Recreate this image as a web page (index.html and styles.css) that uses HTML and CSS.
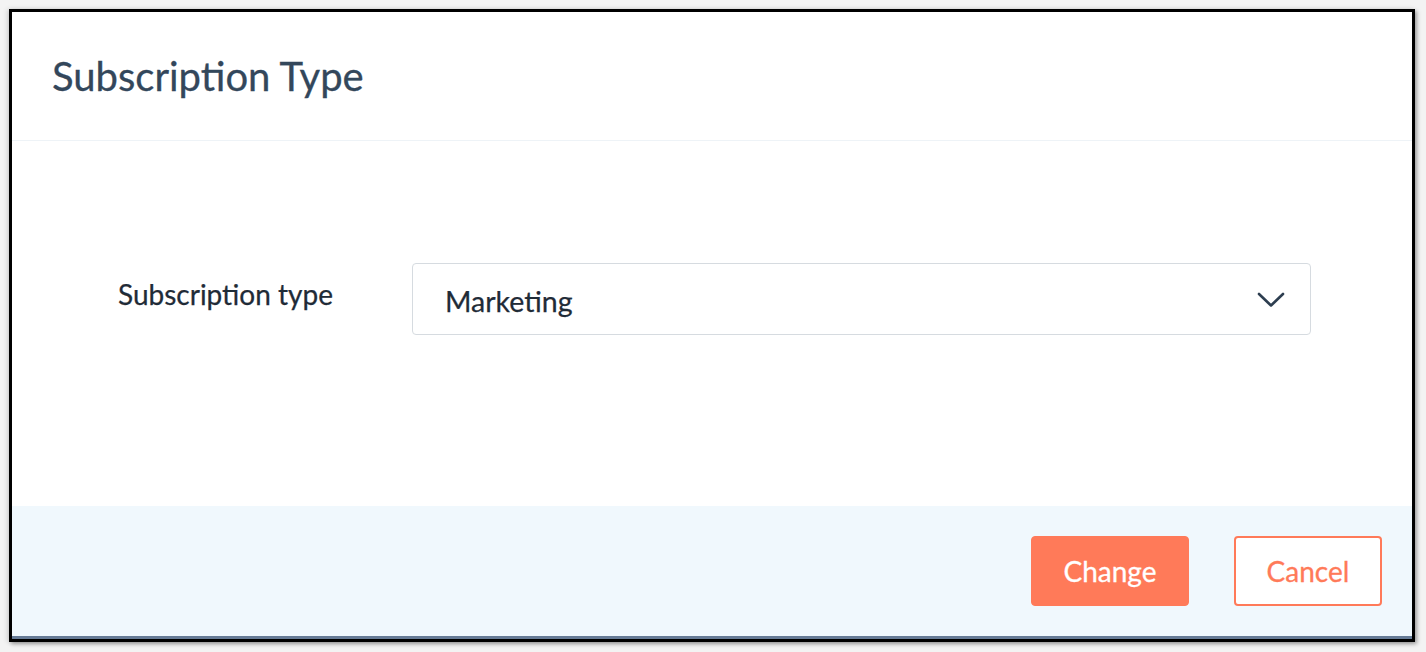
FILE: index.html
```html
<!DOCTYPE html>
<html>
<head>
<meta charset="utf-8">
<link rel="stylesheet" href="styles.css">
</head>
<body>
<div class="dialog">
  <div class="dialog-header">
    <h1 class="dialog-title">Subscription Type</h1>
  </div>
  <div class="dialog-body">
    <div class="field-row">
      <label class="field-label">Subscription type</label>
      <div class="select">
        <span class="select-value">Marketing</span>
        <svg class="select-caret" width="28" height="16" viewBox="0 0 28 16"><path d="M2 2 L14 13.5 L26 2" fill="none" stroke="#2d3e50" stroke-width="2.6" stroke-linecap="round" stroke-linejoin="round"/></svg>
      </div>
    </div>
  </div>
  <div class="dialog-footer">
    <button class="btn btn-primary">Change</button>
    <button class="btn btn-secondary">Cancel</button>
  </div>
</div>
</body>
</html>
```
FILE: styles.css
```css
* { box-sizing: border-box; }
html, body { margin: 0; padding: 0; }
body {
  background: #f3f3f3;
  font-family: Lato, "Noto Sans", sans-serif;
  padding: 9px 0 0 9px;
  height: 652px;
  overflow: hidden;
}
.dialog {
  width: 1406px;
  height: 633px;
  border: 3px solid #000;
  background: #fff;
  display: flex;
  flex-direction: column;
  box-shadow: 2px 2px 4px rgba(0,0,0,0.35), -2px 0 5px rgba(0,0,0,0.12);
}
.dialog-header {
  height: 129px;
  flex: none;
  border-bottom: 1px solid #eef3f7;
  display: flex;
  align-items: center;
  padding-left: 40px;
}
.dialog-title {
  margin: 0;
  font-size: 40px;
  font-weight: 400;
  color: #33475b;
  -webkit-text-stroke: 0.3px #33475b;
}
.dialog-body {
  flex: 1;
  padding: 122px 101px 0 106px;
}
.field-row {
  display: flex;
  align-items: center;
}
.field-label {
  width: 294px;
  font-size: 28px;
  color: #1f2b37;
  margin-top: -10px;
  -webkit-text-stroke: 0.25px #1f2b37;
}
.select {
  flex: 1;
  height: 72px;
  border: 1px solid #d6dbe0;
  border-radius: 4px;
  display: flex;
  align-items: center;
  justify-content: space-between;
  padding: 0 25px 0 32px;
}
.select-value {
  font-size: 28.5px;
  color: #1f2b37;
  margin-top: 4px;
  -webkit-text-stroke: 0.25px #1f2b37;
}
.select-caret {
  margin-top: 1px;
}
.dialog-footer {
  height: 133px;
  flex: none;
  background: #f0f8fd;
  border-bottom: 3px solid #667b96;
  display: flex;
  justify-content: flex-end;
  align-items: center;
  gap: 45px;
  padding-right: 30px;
}
.btn {
  font-family: Lato, "Noto Sans", sans-serif;
  font-size: 28px;
  height: 70px;
  border-radius: 4px;
  cursor: pointer;
}
.btn-primary {
  width: 158px;
  background: #ff7a59;
  border: 1px solid #ff7a59;
  color: #fff;
  -webkit-text-stroke: 0.3px #fff;
}
.btn-secondary {
  width: 148px;
  background: #fff;
  border: 2px solid #ff7a59;
  color: #ff7a59;
  -webkit-text-stroke: 0.3px #ff7a59;
}
```
